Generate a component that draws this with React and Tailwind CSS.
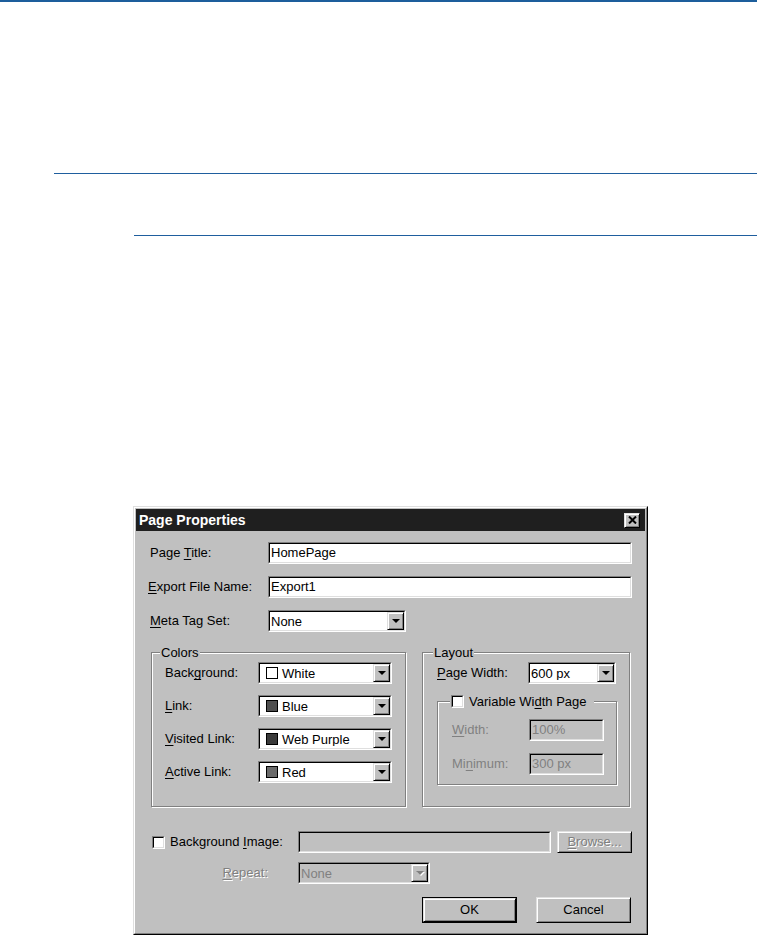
import React from 'react'

const RAISED = 'border border-t-[#dfdfdf] border-l-[#dfdfdf] border-r-black border-b-black shadow-[inset_1px_1px_0_#fff,inset_-1px_-1px_0_#808080] bg-[#c0c0c0]'

function U({ children }) {
  return <span className="underline underline-offset-[2px] decoration-1">{children}</span>
}

function Sunken({ className = '', disabled, children }) {
  return (
    <div className={`border border-t-[#808080] border-l-[#808080] border-r-white border-b-white ${className}`}>
      <div className={`h-full flex items-center border border-t-black border-l-black border-r-[#dfdfdf] border-b-[#dfdfdf] ${disabled ? 'bg-[#c0c0c0] text-[#808080]' : 'bg-white text-black'}`}>
        {children}
      </div>
    </div>
  )
}

function Arrow({ disabled }) {
  return (
    <div className={`w-[17px] h-full flex items-center justify-center ${RAISED}`}>
      <svg width="10" height="6" viewBox="0 0 10 6">
        {disabled && <path d="M2 2h8L6 6z" fill="#fff" />}
        <path d="M1 1h8L5 5z" fill={disabled ? '#808080' : '#000'} />
      </svg>
    </div>
  )
}

function Select({ w, value, swatch, disabled }) {
  return (
    <Sunken className={`h-[22px] ${w}`} disabled={disabled}>
      {swatch && <span className={`ml-[6px] mr-[3px] w-[12px] h-[12px] border border-black shrink-0 ${swatch}`} />}
      <span className="flex-1 pl-[1px] text-[13px] leading-none whitespace-nowrap overflow-hidden">{value}</span>
      <Arrow disabled={disabled} />
    </Sunken>
  )
}

function Check() {
  return <Sunken className="w-[13px] h-[13px] shrink-0" />
}

function Group({ w, h, legend, legendLeft, children }) {
  return (
    <div className={`relative border border-[#808080] shadow-[inset_1px_1px_0_#fff,1px_1px_0_#fff] ${w} ${h}`}>
      <div className={`absolute -top-[8px] flex items-center bg-[#c0c0c0] px-[1px] text-[13px] leading-[15px] ${legendLeft}`}>
        {legend}
      </div>
      {children}
    </div>
  )
}

export default function App() {
  return (
    <div className="min-h-screen bg-white font-['Liberation_Sans',Arial,sans-serif] text-black overflow-hidden">
      <div className="h-[2px] bg-[#1d5e9c]" />
      <div className="mt-[171px] ml-[54px] h-px bg-[#1f5e9e]" />
      <div className="mt-[61px] ml-[134px] h-px bg-[#1f5e9e]" />

      <div className="mt-[270px] ml-[133px] w-[515px] border border-t-[#dfdfdf] border-l-[#dfdfdf] border-r-black border-b-black">
        <div className="border border-t-white border-l-white border-r-[#808080] border-b-[#808080] bg-[#c0c0c0] p-[1px]">
          {/* title bar */}
          <div className="h-[22px] bg-[#1f1f1f] flex items-center justify-between pl-[3px] pr-[5px]">
            <span className="text-white font-bold text-[14px] leading-none">Page Properties</span>
            <div className={`w-[16px] h-[15px] flex items-center justify-center ${RAISED}`}>
              <svg width="9" height="8" viewBox="0 0 9 8">
                <path d="M1 0.5l7 7M8 0.5l-7 7" stroke="#000" strokeWidth="2" />
              </svg>
            </div>
          </div>

          <div className="pl-[14px] pb-[9px] text-[13px]">
            <div className="mt-[11px] flex items-center h-[22px]">
              <span className="w-[118px]">Page <U>T</U>itle:</span>
              <Sunken className="w-[364px] h-[22px]"><span className="pl-[1px]">HomePage</span></Sunken>
            </div>
            <div className="mt-[12px] flex items-center h-[22px]">
              <span className="w-[118px] -ml-[2px]"><U>E</U>xport File Name:</span>
              <Sunken className="w-[364px] h-[22px] ml-[2px]"><span className="pl-[1px]">Export1</span></Sunken>
            </div>
            <div className="mt-[12px] flex items-center h-[22px]">
              <span className="w-[118px]"><U>M</U>eta Tag Set:</span>
              <Select w="w-[138px]" value="None" />
            </div>

            <div className="mt-[20px] ml-[1px] flex">
              <Group w="w-[255px]" h="h-[155px]" legendLeft="left-[8px]" legend="Colors">
                <div className="pt-[9px] pl-[13px] flex flex-col gap-[11px]">
                  <div className="flex items-center h-[22px]">
                    <span className="w-[93px]">Back<U>g</U>round:</span>
                    <Select w="w-[134px]" value="White" swatch="bg-white" />
                  </div>
                  <div className="flex items-center h-[22px]">
                    <span className="w-[93px]"><U>L</U>ink:</span>
                    <Select w="w-[134px]" value="Blue" swatch="bg-[#4e4e4e]" />
                  </div>
                  <div className="flex items-center h-[22px]">
                    <span className="w-[93px]"><U>V</U>isited Link:</span>
                    <Select w="w-[134px]" value="Web Purple" swatch="bg-[#3a3a3a]" />
                  </div>
                  <div className="flex items-center h-[22px]">
                    <span className="w-[93px]"><U>A</U>ctive Link:</span>
                    <Select w="w-[134px]" value="Red" swatch="bg-[#6a6a6a]" />
                  </div>
                </div>
              </Group>

              <div className="ml-[16px]">
                <Group w="w-[208px]" h="h-[155px]" legendLeft="left-[10px]" legend="Layout">
                  <div className="pt-[9px] pl-[14px]">
                    <div className="flex items-center h-[22px]">
                      <span className="w-[91px]"><U>P</U>age Width:</span>
                      <Select w="w-[88px]" value="600 px" />
                    </div>
                    <div className="mt-[17px]">
                      <Group
                        w="w-[180px]"
                        h="h-[84px]"
                        legendLeft="left-[12px]"
                        legend={
                          <>
                            <Check />
                            <span className="ml-[5px] mr-[6px]">Variable Wi<U>d</U>th Page</span>
                          </>
                        }
                      >
                        <div className="pt-[17px] pl-[14px] flex flex-col gap-[12px] text-[#808080]">
                          <div className="flex items-center h-[22px]">
                            <span className="w-[77px]"><U>W</U>idth:</span>
                            <Sunken className="w-[75px] h-[22px]" disabled><span className="pl-[1px]">100%</span></Sunken>
                          </div>
                          <div className="flex items-center h-[22px]">
                            <span className="w-[77px]">Mi<U>n</U>imum:</span>
                            <Sunken className="w-[75px] h-[22px]" disabled><span className="pl-[1px]">300 px</span></Sunken>
                          </div>
                        </div>
                      </Group>
                    </div>
                  </div>
                </Group>
              </div>
            </div>

            <div className="mt-[24px] flex items-center h-[22px]">
              <div className="w-[148px] flex items-center pl-[2px]">
                <Check />
                <span className="ml-[5px]">Background <U>I</U>mage:</span>
              </div>
              <Sunken className="w-[253px] h-[22px]" disabled />
              <div className={`ml-[6px] w-[75px] h-[22px] flex items-center justify-center text-[#808080] [text-shadow:1px_1px_0_#fff] ${RAISED}`}>
                <span><U>B</U>rowse...</span>
              </div>
            </div>
            <div className="mt-[9px] flex items-center h-[22px]">
              <span className="w-[148px] text-right pr-[30px] text-[#808080] [text-shadow:1px_1px_0_#fff]"><U>R</U>epeat:</span>
              <Select w="w-[132px]" value="None" disabled />
            </div>

            <div className="mt-[13px] flex h-[26px]">
              <div className="ml-[272px] w-[95px] h-[26px] border border-black">
                <div className={`w-full h-full flex items-center justify-center ${RAISED}`}>OK</div>
              </div>
              <div className={`ml-[19px] w-[95px] h-[26px] flex items-center justify-center ${RAISED}`}>Cancel</div>
            </div>
          </div>
        </div>
      </div>
    </div>
  )
}
